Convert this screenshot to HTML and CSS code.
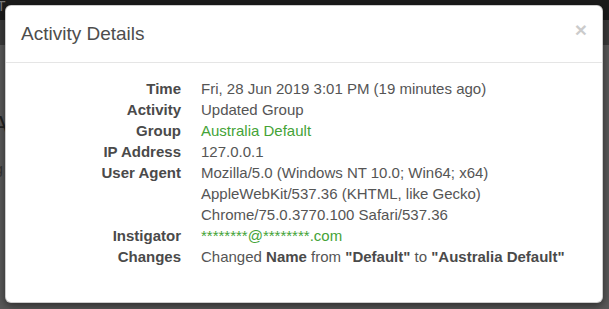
FILE: index.html
```html
<!DOCTYPE html>
<html>
<head>
<meta charset="utf-8">
<link rel="stylesheet" href="styles.css">
</head>
<body>
<div class="page">
  <div class="navbar"><span class="nav-frag">T</span></div>
  <div class="subbar"></div>
  <div class="content">
    <span class="frag-a">A</span>
    <span class="frag-g">g</span>
  </div>
</div>
<div class="modal">
  <div class="modal-header">
    <button class="close" type="button">×</button>
    <h4 class="modal-title">Activity Details</h4>
  </div>
  <div class="modal-body">
    <dl class="details">
      <dt>Time</dt><dd>Fri, 28 Jun 2019 3:01 PM (19 minutes ago)</dd>
      <dt>Activity</dt><dd>Updated Group</dd>
      <dt>Group</dt><dd><a class="link" href="#">Australia Default</a></dd>
      <dt>IP Address</dt><dd>127.0.0.1</dd>
      <dt>User Agent</dt><dd>Mozilla/5.0 (Windows NT 10.0; Win64; x64)<br>AppleWebKit/537.36 (KHTML, like Gecko)<br>Chrome/75.0.3770.100 Safari/537.36</dd>
      <dt>Instigator</dt><dd><a class="link" href="#">********@********.com</a></dd>
      <dt>Changes</dt><dd>Changed <b>Name</b> from <b>"Default"</b> to <b>"Australia Default"</b></dd>
    </dl>
  </div>
</div>
</body>
</html>
```
FILE: styles.css
```css
html, body {
  margin: 0;
  padding: 0;
  height: 100%;
}
body {
  font-family: "Liberation Sans", Arial, sans-serif;
  font-size: 15px;
  background: #595959;
  overflow: hidden;
}
.page {
  display: flex;
  flex-direction: column;
  height: 100%;
}
.navbar {
  height: 20px;
  background: #1b1b1b;
  position: relative;
}
.nav-frag {
  color: #777;
  font-size: 14px;
  line-height: 12px;
  display: block;
  margin-left: -3px;
}
.subbar {
  height: 25px;
  background: #3b3b3b;
}
.content {
  flex: 1;
  background: #595959;
  position: relative;
}
.frag-a {
  position: absolute;
  left: -8px;
  top: 66px;
  font-size: 24px;
  color: #222;
}
.frag-g {
  position: absolute;
  left: -5px;
  top: 116px;
  font-size: 14px;
  color: #333;
}
.modal {
  position: absolute;
  left: 5px;
  top: 5px;
  width: 598px;
  box-sizing: border-box;
  background: #fff;
  border: 1px solid rgba(0,0,0,.2);
  border-radius: 6px;
  box-shadow: 0 3px 9px rgba(0,0,0,.5);
}
.modal-header {
  padding: 15px;
  border-bottom: 1px solid #e5e5e5;
  display: flex;
  flex-direction: row-reverse;
  justify-content: space-between;
  align-items: flex-start;
}
.modal-title {
  margin: 0;
  font-size: 19px;
  font-weight: normal;
  line-height: 26px;
  color: #4d4d4d;
}
.close {
  border: 0;
  background: transparent;
  padding: 0;
  margin-top: -2px;
  font-family: "Liberation Sans", Arial, sans-serif;
  font-size: 21px;
  font-weight: bold;
  line-height: 1;
  color: #000;
  opacity: .2;
  cursor: pointer;
}
.modal-body {
  padding: 15px;
}
.details {
  margin: 0 0 20px;
  display: grid;
  grid-template-columns: 160px 1fr;
  column-gap: 20px;
  line-height: 21px;
}
.details dt {
  text-align: right;
  font-weight: bold;
  color: #4a4a4a;
}
.details dd {
  margin: 0;
  color: #555;
}
.details dd b {
  color: #4a4a4a;
}
.link {
  color: #44a337;
  text-decoration: none;
}
```
